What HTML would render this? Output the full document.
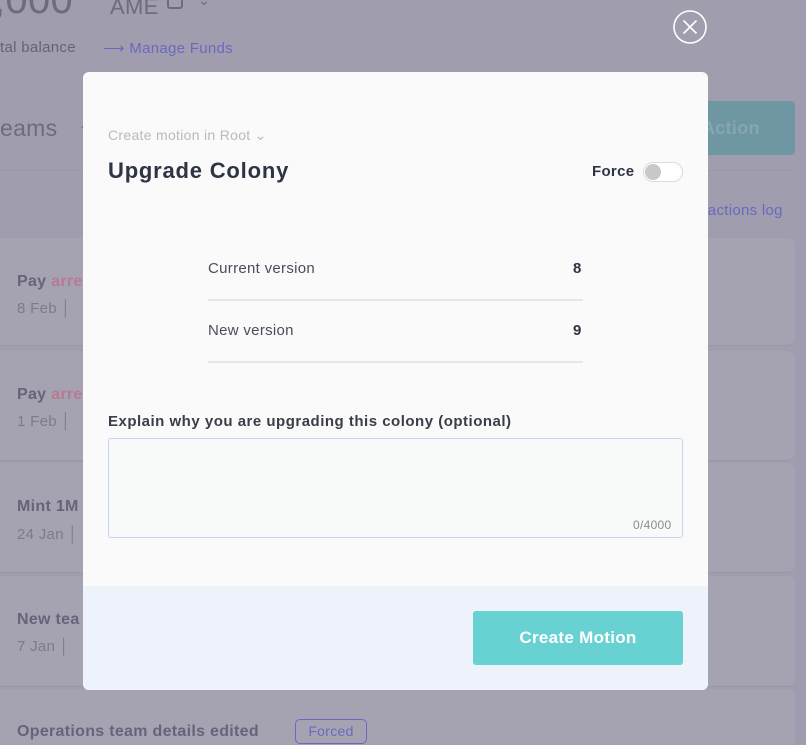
<!DOCTYPE html>
<html><head><meta charset="utf-8"><style>
*{box-sizing:border-box;margin:0;padding:0}
html,body{width:806px;height:745px;overflow:hidden}
body{background:#a09dae;font-family:"Liberation Sans",sans-serif;position:relative;letter-spacing:0.3px}
.abs{position:absolute}
.card{position:absolute;left:-10px;width:805px;background:#a5a3b2;border-radius:8px;border-bottom:1px solid #9896a9}
.t{font-size:16px;font-weight:bold;color:#66637a;position:absolute;left:17px}
.d{font-size:15px;color:#7d7a8c;position:absolute;left:17px}
.modal{position:absolute;left:83px;top:72px;width:625px;height:618px;background:#fafafa;border-radius:6px;overflow:hidden}
</style></head><body>
<div class="abs" style="left:-6px;top:-22px;font-size:40px;color:#6e6b7e">,000</div>
<div class="abs" style="left:110px;top:-6px;font-size:22px;color:#6e6b7e">AME</div>
<div class="abs" style="left:167px;top:-4px;width:16px;height:13px;border:2px solid #6e6b7e;border-radius:3px"></div>
<div class="abs" style="left:198px;top:-8px;font-size:14px;color:#6e6b7e">⌄</div>
<div class="abs" style="left:0;top:39px;font-size:15px;color:#65627a">tal balance</div>
<div class="abs" style="left:103px;top:39px;font-size:15px;color:#6b68c0">⟶ Manage Funds</div>
<div class="abs" style="left:0;top:115px;font-size:23px;color:#6e6b7e">eams</div>
<div class="abs" style="left:78px;top:115px;font-size:16px;color:#6e6b7e">⌄</div>
<div class="abs" style="left:0;top:170px;width:795px;height:1px;background:#9896a9"></div>
<div class="abs" style="left:690px;top:101px;width:105px;height:54px;background:#6f96a3;border-radius:4px;color:#86a6b2;font-size:18px;font-weight:bold;padding:17px 0 0 12px">Action</div>
<div class="abs" style="left:700px;top:202px;font-size:15px;color:#6b68c0">sactions log</div>
<div class="card" style="top:238px;height:108px"></div>
<div class="card" style="top:351px;height:110px"></div>
<div class="card" style="top:463px;height:110px"></div>
<div class="card" style="top:576px;height:111px"></div>
<div class="card" style="top:689px;height:80px"></div>
<div class="t" style="top:273px">Pay <span style="color:#b77a92">arre</span></div><div class="d" style="top:300px">8 Feb │</div>
<div class="t" style="top:386px">Pay <span style="color:#b77a92">arre</span></div><div class="d" style="top:413px">1 Feb │</div>
<div class="t" style="top:498px">Mint 1M</div><div class="d" style="top:526px">24 Jan │</div>
<div class="t" style="top:611px">New tea</div><div class="d" style="top:638px">7 Jan │</div>
<div class="t" style="top:723px">Operations team details edited</div>
<div class="abs" style="left:295px;top:719px;width:72px;height:25px;border:1px solid #6b68c0;border-radius:5px;color:#6b68c0;font-size:14px;text-align:center;line-height:23px">Forced</div>
<div class="abs" style="right:0;top:0;width:11px;height:745px;background:#9e9cae"></div>
<svg class="abs" style="left:673px;top:10px" width="36" height="36"><circle cx="17" cy="17" r="16" fill="none" stroke="#fff" stroke-width="1.6"/><path d="M10.5 10.5L23.5 23.5M23.5 10.5L10.5 23.5" stroke="#fff" stroke-width="1.6"/></svg>
<div class="modal">
 <div class="abs" style="left:25px;top:55px;font-size:14px;color:#b9b9bf">Create motion in Root ⌄</div>
 <div class="abs" style="left:25px;top:86px;font-size:22px;font-weight:bold;color:#2e3444;letter-spacing:0.8px">Upgrade Colony</div>
 <div class="abs" style="left:509px;top:91px;font-size:15px;font-weight:bold;color:#2e3444">Force</div>
 <div class="abs" style="left:560px;top:90px;width:40px;height:20px;border:1px solid #d8dbdf;border-radius:10px;background:#fff"><div style="margin:1px;width:16px;height:16px;border-radius:50%;background:#c8c8c8"></div></div>
 <div class="abs" style="left:125px;top:188px;font-size:15px;color:#4a4e5a">Current version</div>
 <div class="abs" style="left:490px;top:188px;font-size:15px;font-weight:bold;color:#2e3444">8</div>
 <div class="abs" style="left:125px;top:227px;width:375px;height:2px;background:#e6e6ec"></div>
 <div class="abs" style="left:125px;top:250px;font-size:15px;color:#4a4e5a">New version</div>
 <div class="abs" style="left:490px;top:250px;font-size:15px;font-weight:bold;color:#2e3444">9</div>
 <div class="abs" style="left:125px;top:289px;width:375px;height:2px;background:#e6e6ec"></div>
 <div class="abs" style="left:25px;top:341px;font-size:15px;font-weight:bold;color:#3a3e4a;letter-spacing:0.5px">Explain why you are upgrading this colony (optional)</div>
 <div class="abs" style="left:25px;top:366px;width:575px;height:100px;border:1px solid #c5d5f0;border-radius:3px;background:#f8f9f9"></div>
 <div class="abs" style="left:550px;top:446px;font-size:12px;color:#8a8a90">0/4000</div>
 <div class="abs" style="left:0;top:514px;width:625px;height:104px;background:#eef2fa"></div>
 <div class="abs" style="left:390px;top:539px;width:210px;height:54px;background:#68d2d2;border-radius:3px;color:#fff;font-size:17px;font-weight:bold;text-align:center;line-height:54px">Create Motion</div>
</div>
</body></html>
